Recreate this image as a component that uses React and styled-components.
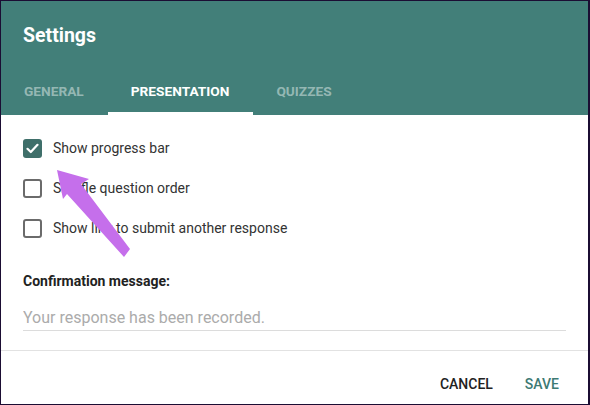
import React, { useState } from 'react';
import styled, { createGlobalStyle } from 'styled-components';

const Global = createGlobalStyle`
  html, body { margin: 0; padding: 0; background: #fff; }
  body { font-family: Roboto, "Liberation Sans", Arial, sans-serif; }
`;

const Frame = styled.div`
  position: relative;
  width: 590px;
  height: 405px;
  box-sizing: border-box;
  border: 1px solid #1b0d33;
  border-right-width: 2px;
  background: #fff;
  display: flex;
  flex-direction: column;
  overflow: hidden;
`;

const Header = styled.div`
  background: #427f79;
  height: 114px;
  display: flex;
  flex-direction: column;
`;

const Title = styled.div`
  height: 69px;
  box-sizing: border-box;
  padding: 24px 0 0 22px;
  color: #fff;
  font-size: 19.5px;
  font-weight: 700;
  line-height: 22px;
`;

const Tabs = styled.div`
  display: flex;
  flex: 1;
`;

const Tab = styled.div`
  padding: 0 24px 0 23px;
  display: flex;
  align-items: center;
  font-size: 13.7px;
  font-weight: 700;
  color: ${p => (p.$active ? '#fff' : 'rgba(255,255,255,0.45)')};
  border-bottom: 3px solid ${p => (p.$active ? '#fff' : 'transparent')};
`;

const Body = styled.div`
  padding: 23px 22px 0 22px;
  display: flex;
  flex-direction: column;
`;

const Option = styled.label`
  display: flex;
  align-items: center;
  gap: 11px;
  height: 20px;
  margin-bottom: 20px;
  font-size: 14px;
  color: #333;
  cursor: pointer;
`;

const Box = styled.span`
  width: 19px;
  height: 19px;
  box-sizing: border-box;
  border-radius: 3px;
  border: ${p => (p.$checked ? 'none' : '2px solid #6b6b6b')};
  background: ${p => (p.$checked ? '#3f6f6a' : '#fff')};
  display: flex;
  align-items: center;
  justify-content: center;
`;

const FieldLabel = styled.div`
  margin-top: 15px;
  font-size: 14px;
  font-weight: 700;
  color: #222;
`;

const Input = styled.input`
  margin-top: 19px;
  border: none;
  border-bottom: 1px solid #dcdcdc;
  padding: 0 0 3px 0;
  font-family: inherit;
  font-size: 16px;
  color: #333;
  outline: none;
  width: 100%;
  &::placeholder { color: #ababab; }
`;

const Divider = styled.div`
  margin-top: 19px;
  height: 1px;
  background: #e2e2e2;
`;

const Actions = styled.div`
  flex: 1;
  display: flex;
  justify-content: flex-end;
  align-items: center;
  gap: 32px;
  padding: 12px 29px 0 0;
`;

const Action = styled.button`
  background: none;
  border: none;
  padding: 0;
  font-family: inherit;
  font-size: 14px;
  font-weight: 500;
  color: ${p => p.$color || '#222'};
  cursor: pointer;
`;

const Arrow = styled.svg`
  position: absolute;
  left: 0;
  top: 0;
  pointer-events: none;
`;

const Check = () => (
  <svg width="13" height="11" viewBox="0 0 13 11">
    <path d="M1.5 5.8 L4.8 9 L11.5 1.8" fill="none" stroke="#fff" strokeWidth="2.2" strokeLinecap="round" strokeLinejoin="round" />
  </svg>
);

const options = [
  'Show progress bar',
  'Shuffle question order',
  'Show link to submit another response',
];

export default function App() {
  const [checked, setChecked] = useState([true, false, false]);

  return (
    <Frame>
      <Global />
      <Header>
        <Title>Settings</Title>
        <Tabs>
          <Tab>GENERAL</Tab>
          <Tab $active>PRESENTATION</Tab>
          <Tab>QUIZZES</Tab>
        </Tabs>
      </Header>
      <Body>
        {options.map((o, i) => (
          <Option key={o} onClick={() => setChecked(checked.map((c, j) => (j === i ? !c : c)))}>
            <Box $checked={checked[i]}>{checked[i] && <Check />}</Box>
            {o}
          </Option>
        ))}
        <FieldLabel>Confirmation message:</FieldLabel>
        <Input placeholder="Your response has been recorded." />
      </Body>
      <Divider />
      <Actions>
        <Action>CANCEL</Action>
        <Action $color="#3d7a73">SAVE</Action>
      </Actions>
      <Arrow width="590" height="405" viewBox="0 0 590 405">
        <polygon
          points="56,169 88,178 80,183 129,248 123,256 66,193 62,198"
          fill="#c56feb"
        />
      </Arrow>
    </Frame>
  );
}
